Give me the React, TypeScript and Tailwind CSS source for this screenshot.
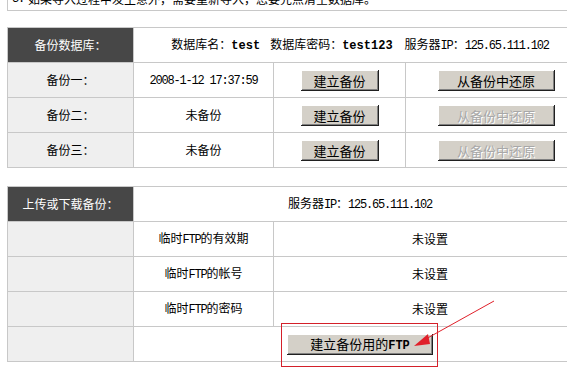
import React from 'react';

const cjk = "font-['SimSun','Noto_Sans_CJK_SC',sans-serif]";

// ASCII runs look like the narrow SimSun latin glyphs
const Mono: React.FC<{ children: React.ReactNode; bold?: boolean }> = ({ children, bold }) => (
  <span
    className={`font-['Liberation_Mono',monospace] text-[12px] ${
      bold ? 'font-bold' : 'tracking-[-1.2px]'
    }`}
  >
    {children}
  </span>
);

const Btn: React.FC<{ children: React.ReactNode; w: string; disabled?: boolean }> = ({
  children,
  w,
  disabled,
}) => (
  <button
    className={`${w} h-[21px] bg-[#d4d0c8] text-[13px] leading-none shadow-[inset_-1px_-1px_0_#202020,inset_1px_1px_0_#ffffff,inset_-2px_-2px_0_#808080] ${
      disabled ? 'text-[#a8a8a8] [text-shadow:1px_1px_0_#ffffff]' : 'text-black'
    }`}
  >
    {children}
  </button>
);

const td = 'border border-[#c8c8c8] h-[35px] p-0 text-center align-middle';
const head = `${td} bg-[#474747] text-white`;
const label = `${td} bg-[#efefef]`;

const backups = [
  { name: '备份一：', time: '2008-1-12 17:37:59', done: true },
  { name: '备份二：', time: '未备份', done: false },
  { name: '备份三：', time: '未备份', done: false },
];

const ftpRows = ['有效期', '帐号', '密码'];

export default function App() {
  return (
    <div className={`relative w-[567px] h-[375px] overflow-hidden bg-white text-[12px] text-black ${cjk}`}>
      <div className="pl-[7px] w-[586px]">
        {/* cut-off notice box */}
        <div className="-mt-[13px] h-[24px] border border-[#c8c8c8] border-r-0 flex items-center pl-[4px] whitespace-nowrap">
          <Mono>3. </Mono>
          <span className="ml-[4px]">如果导入过程中发生意外，需要重新导入，您要先点清空数据库。</span>
        </div>

        {/* backup table */}
        <table className="mt-[16px] w-[579px] border-collapse table-fixed">
          <colgroup>
            <col className="w-[126px]" />
            <col className="w-[140px]" />
            <col className="w-[132px]" />
            <col className="w-[181px]" />
          </colgroup>
          <tbody>
            <tr>
              <td className={head}>备份数据库：</td>
              <td className={td} colSpan={3}>
                数据库名：<Mono bold>test</Mono>
                <span className="inline-block w-[10px]" />
                数据库密码：<Mono bold>test123</Mono>
                <span className="inline-block w-[12px]" />
                服务器<Mono>IP</Mono>：<Mono>125.65.111.102</Mono>
              </td>
            </tr>
            {backups.map((b) => (
              <tr key={b.name}>
                <td className={label}>{b.name}</td>
                <td className={td}>{b.done ? <Mono>{b.time}</Mono> : b.time}</td>
                <td className={td}>
                  <Btn w="w-[78px]">建立备份</Btn>
                </td>
                <td className={td}>
                  <Btn w="w-[117px]" disabled={!b.done}>
                    从备份中还原
                  </Btn>
                </td>
              </tr>
            ))}
          </tbody>
        </table>

        {/* ftp table */}
        <table className="mt-[18px] w-[579px] border-collapse table-fixed">
          <colgroup>
            <col className="w-[126px]" />
            <col className="w-[140px]" />
            <col className="w-[313px]" />
          </colgroup>
          <tbody>
            <tr>
              <td className={head}>上传或下载备份：</td>
              <td className={td} colSpan={2}>
                服务器<Mono>IP</Mono>：<Mono>125.65.111.102</Mono>
              </td>
            </tr>
            {ftpRows.map((r) => (
              <tr key={r}>
                <td className={label}></td>
                <td className={td}>
                  临时<Mono>FTP</Mono>的{r}
                </td>
                <td className={td}>未设置</td>
              </tr>
            ))}
            <tr>
              <td className={label}></td>
              <td className={td} colSpan={2}>
                <Btn w="w-[146px]">
                  建立备份用的<Mono bold>FTP</Mono>
                </Btn>
              </td>
            </tr>
          </tbody>
        </table>
      </div>

      {/* red highlight box */}
      <div className="absolute left-[281px] top-[323px] w-[157px] h-[44px] border border-[#d4202a]" />

      {/* red arrow */}
      <svg className="absolute left-0 top-0 pointer-events-none" width="567" height="375">
        <line x1="494" y1="301" x2="424" y2="340" stroke="#e0202a" strokeWidth="1" />
        <polygon points="414,346 428,334 430,344" fill="#e0202a" />
      </svg>
    </div>
  );
}
